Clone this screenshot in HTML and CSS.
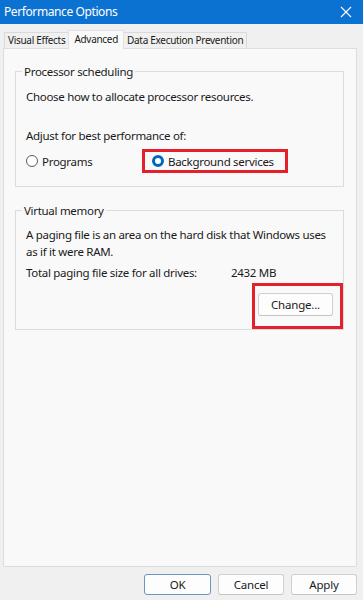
FILE: index.html
```html
<!DOCTYPE html>
<html>
<head>
<meta charset="utf-8">
<link rel="stylesheet" href="styles.css">
</head>
<body>
<div class="window">
  <div class="titlebar">
    <span class="title">Performance Options</span>
    <svg class="close" width="12" height="12" viewBox="0 0 12 12"><path d="M1 1L11 11M11 1L1 11" stroke="#fff" stroke-width="1.1"/></svg>
  </div>
  <div class="tabs">
    <div class="tab">Visual Effects</div>
    <div class="tab active">Advanced</div>
    <div class="tab">Data Execution Prevention</div>
  </div>
  <div class="panel">
    <fieldset class="group proc">
      <legend>Processor scheduling</legend>
      <p class="line">Choose how to allocate processor resources.</p>
      <p class="line adjust">Adjust for best performance of:</p>
      <div class="radios">
        <label class="radio"><span class="dot"></span>Programs</label>
        <label class="radio hl"><span class="dot on"></span>Background services</label>
      </div>
    </fieldset>
    <fieldset class="group vm">
      <legend>Virtual memory</legend>
      <p class="line para">A paging file is an area on the hard disk that Windows uses as if it were RAM.</p>
      <div class="total"><span class="tlabel">Total paging file size for all drives:</span><span>2432 MB</span></div>
      <div class="changerow">
        <div class="hlbox"><button class="btn change">Change...</button></div>
      </div>
    </fieldset>
  </div>
  <div class="footer">
    <button class="btn ok">OK</button>
    <button class="btn">Cancel</button>
    <button class="btn">Apply</button>
  </div>
</div>
</body>
</html>
```
FILE: styles.css
```css
* { box-sizing: border-box; }
html, body { margin: 0; padding: 0; }
body {
  width: 363px;
  height: 600px;
  overflow: hidden;
  background: #f0f0f0;
  font-family: "Noto Sans", "Open Sans", sans-serif;
  font-size: 11.5px;
  letter-spacing: -0.3px;
  color: #1a1a1a;
}
.window { display: flex; flex-direction: column; height: 600px; }
.titlebar {
  height: 24px;
  background: #0c72d2;
  color: #fff;
  display: flex;
  align-items: center;
  justify-content: space-between;
  padding: 0 11px 1px 4px;
  font-size: 12px;
  letter-spacing: -0.4px;
}
.tabs {
  display: flex;
  align-items: flex-end;
  padding-left: 4px;
  margin-top: 6px;
  height: 18px;
}
.tab {
  height: 16px;
  line-height: 15px;
  padding: 0 3px;
  border: 1px solid #dadada;
  border-bottom: none;
  background: #f0f0f0;
  font-size: 10px;
  margin-right: -1px;
}
.tab.active {
  height: 19px;
  line-height: 17px;
  background: #f9f9f9;
  border-color: #e2e2e2;
  position: relative;
  z-index: 1;
  margin-bottom: -1px;
  padding: 0 5px;
}
.panel {
  margin: 0 6px 0 3px;
  height: 519px;
  background: #f9f9f9;
  border: 1px solid #dddddd;
  padding: 15px 12px 0 11px;
}
.group {
  margin: 0;
  border: 1px solid #dcdcdc;
  padding: 0 10px 0 10px;
  min-width: 0;
}
.group legend {
  padding: 0 2px;
  margin-left: -4px;
  font-size: 11.5px;
}
.line { margin: 0; line-height: 17px; }
.proc { height: 123px; padding-top: 9px; }
.adjust { margin-top: 22px; }
.radios { display: flex; margin-top: 5px; }
.radio {
  display: flex;
  align-items: center;
  height: 24px;
}
.radio:first-child { width: 116px; }
.radio.hl {
  border: 3px solid #e3202c;
  padding: 0 11px 0 7px;
}
.dot {
  width: 12px;
  height: 12px;
  border-radius: 50%;
  border: 1px solid #5a5a5a;
  margin-right: 4px;
  background: #fff;
}
.dot.on {
  border: 3.5px solid #0067c0;
  background: #fff;
}
.vm { margin-top: 16px; height: 127px; padding-top: 8px; }
.total { display: flex; margin-top: 4px; line-height: 17px; }
.tlabel { width: 205px; }
.changerow { display: flex; justify-content: flex-end; margin-top: 2px; margin-right: -10px; }
.hlbox {
  border: 3px solid #e3202c;
  padding: 7px 7px 10px 3px;
}
.btn {
  font-family: inherit;
  font-size: 11.5px;
  letter-spacing: -0.2px;
  color: #1a1a1a;
  background: #fdfdfd;
  border: 1px solid #d0d0d0;
  border-bottom-color: #c4c4c4;
  border-radius: 3px;
  height: 21px;
  padding: 0;
}
.change { width: 75px; height: 23px; }
.footer {
  display: flex;
  justify-content: flex-end;
  gap: 7px;
  padding: 7px 6px 0 0;
}
.footer .btn { width: 66px; height: 21px; }
.footer .ok { border: 1px solid #6b94c4; width: 67px; }
```
